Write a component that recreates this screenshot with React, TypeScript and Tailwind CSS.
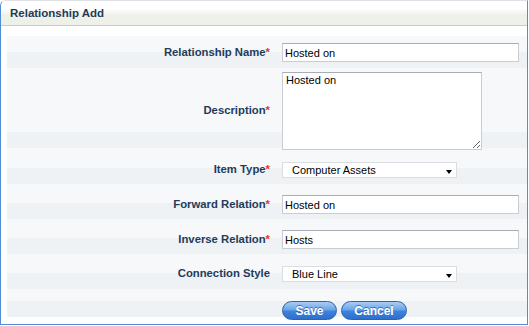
import React from "react";

const labelCls =
  "w-[263px] shrink-0 text-right text-[11.3px] font-bold text-[#1f3c5b] leading-none";
const inputCls =
  "h-[19px] w-[237px] border border-[#c9ccd2] border-t-[#a9acb3] bg-white px-[2px] text-[11px] text-black outline-none";

// light band on top, darker 16px band at the bottom of every row
const rowBg =
  "bg-[linear-gradient(to_bottom,#f6f8fa_0,#f6f8fa_calc(100%-16px),#eef2f5_calc(100%-16px),#eef2f5_100%)]";

function Label({ text, required = true }: { text: string; required?: boolean }) {
  return (
    <div className={labelCls}>
      {text}
      {required && <span className="text-[#e3342f]">*</span>}
    </div>
  );
}

function Select({ value }: { value: string }) {
  return (
    <div className="relative flex h-[16px] w-[175px] items-center border border-[#dadde2] bg-white pl-[9px] text-[11px] text-black">
      {value}
      <span className="absolute right-[4px] top-[7px] h-0 w-0 border-x-[3.5px] border-t-[4px] border-x-transparent border-t-black" />
    </div>
  );
}

function Button({ children, width }: { children: string; width: string }) {
  return (
    <button
      className={`${width} h-[19px] rounded-full border border-[#2c62b0] bg-[linear-gradient(to_bottom,#a9cdf4_0%,#6aa5e8_45%,#3f82db_55%,#2d6fcc_100%)] text-[12px] font-bold leading-none text-white [text-shadow:0_-1px_0_rgba(20,60,120,0.6)]`}
    >
      {children}
    </button>
  );
}

export default function App() {
  return (
    <div className="h-[326px] w-[529px] bg-white font-['Liberation_Sans',Arial,sans-serif]">
      <div className="h-[325px] w-[528px] overflow-hidden rounded-tl-[6px] border-x border-b border-t border-x-[#4f8fd6] border-b-[#4f8fd6] border-t-[#dde1e6]">
        {/* Header */}
        <div className="flex h-[25px] items-center border-b border-[#c9ccc5] bg-[linear-gradient(to_bottom,#ffffff_0%,#ffffff_30%,#eef1e9_60%,#eef1e9_100%)] pl-[9px] pt-[1px]">
          <span className="text-[11.5px] font-bold text-[#1f3a56]">Relationship Add</span>
        </div>

        {/* Form */}
        <div className="pl-[6px] pt-[10px]">
          <div className={`flex h-[32px] items-start pt-[7px] ${rowBg}`}>
            <div className="flex items-center gap-[12px]">
              <Label text="Relationship Name" />
              <input className={inputCls} defaultValue="Hosted on" />
            </div>
          </div>

          <div className={`flex h-[80px] items-start pt-[4px] ${rowBg}`}>
            <div className="flex items-center gap-[12px]">
              <Label text="Description" />
              <textarea
                className="relative z-10 h-[78px] w-[200px] border border-[#c9ccd2] border-t-[#a9acb3] bg-white px-[3px] py-0 text-[11px] leading-[14px] text-black outline-none"
                defaultValue="Hosted on"
              />
            </div>
          </div>

          <div className={`flex h-[36px] items-start pt-[14px] ${rowBg}`}>
            <div className="flex items-center gap-[12px]">
              <Label text="Item Type" />
              <Select value="Computer Assets" />
            </div>
          </div>

          <div className={`flex h-[35px] items-start pt-[11px] ${rowBg}`}>
            <div className="flex items-center gap-[12px]">
              <Label text="Forward Relation" />
              <input className={inputCls} defaultValue="Hosted on" />
            </div>
          </div>

          <div className={`flex h-[35px] items-start pt-[11px] ${rowBg}`}>
            <div className="flex items-center gap-[12px]">
              <Label text="Inverse Relation" />
              <input className={inputCls} defaultValue="Hosts" />
            </div>
          </div>

          <div className={`flex h-[35px] items-start pt-[12px] ${rowBg}`}>
            <div className="flex items-center gap-[12px]">
              <Label text="Connection Style" required={false} />
              <Select value="Blue Line" />
            </div>
          </div>

          <div className={`flex h-[28px] items-start pt-[12px] ${rowBg}`}>
            <div className="ml-[275px] flex gap-[4px]">
              <Button width="w-[55px]">Save</Button>
              <Button width="w-[66px]">Cancel</Button>
            </div>
          </div>
        </div>
      </div>
    </div>
  );
}
